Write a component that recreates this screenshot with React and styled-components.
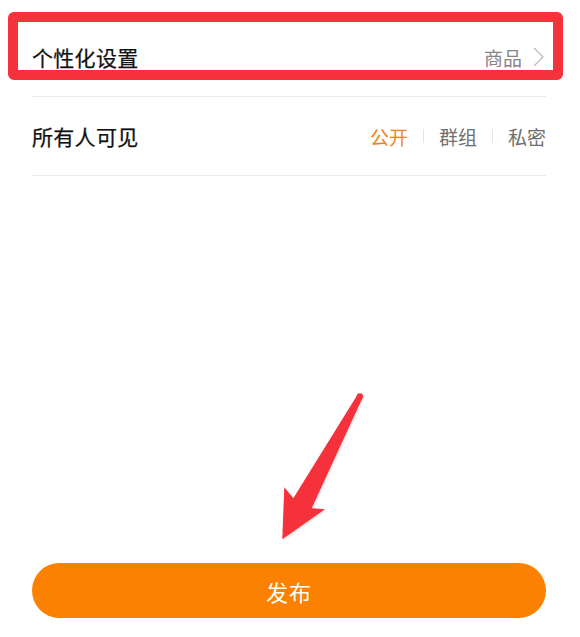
import React, { useState } from 'react';
import styled, { createGlobalStyle } from 'styled-components';

const GlobalStyle = createGlobalStyle`
  html, body {
    margin: 0;
    padding: 0;
    background: #ffffff;
  }
  body {
    font-family: "Noto Sans CJK SC", "Noto Sans", sans-serif;
  }
`;

const Page = styled.div`
  position: relative;
  box-sizing: border-box;
  width: 580px;
  min-height: 637px;
  padding: 18px 34px 19px 32px;
  display: flex;
  flex-direction: column;
  background: #fff;
`;

const Row = styled.div`
  height: 78px;
  display: flex;
  align-items: center;
  justify-content: space-between;
  border-bottom: 1px solid #ebebeb;
`;

const Label = styled.span`
  font-size: 21px;
  color: #111;
  letter-spacing: 0.3px;
  -webkit-text-stroke: 0.25px #111;
`;

const Value = styled.div`
  display: flex;
  align-items: center;
  gap: 11px;
  padding-right: 2px;
  font-size: 19px;
  color: #858585;
`;

const Options = styled.div`
  display: flex;
  align-items: center;
`;

const Option = styled.button`
  border: none;
  background: none;
  padding: 0;
  font-family: inherit;
  font-size: 19px;
  color: ${(p) => (p.$active ? '#f2831a' : '#6e6e6e')};
  cursor: pointer;
`;

const Divider = styled.span`
  width: 1px;
  height: 14px;
  margin: 0 15px;
  background: #e4e4e4;
`;

const PublishButton = styled.button`
  margin-top: auto;
  height: 55px;
  border: none;
  border-radius: 28px;
  background: #fc8100;
  color: #fff;
  font-family: inherit;
  font-size: 22px;
  letter-spacing: 1px;
  cursor: pointer;
`;

const Highlight = styled.div`
  position: absolute;
  left: 8px;
  top: 12px;
  width: 555px;
  height: 68px;
  box-sizing: border-box;
  border: 10px solid #f5323c;
  border-radius: 6px;
  pointer-events: none;
`;

const ArrowMark = styled.svg`
  position: absolute;
  left: 276px;
  top: 388px;
  width: 94px;
  height: 156px;
  pointer-events: none;
  filter: drop-shadow(1px 1px 1px rgba(0, 0, 0, 0.15));
`;

const choices = ['公开', '群组', '私密'];

export default function App() {
  const [scope, setScope] = useState('公开');

  return (
    <>
      <GlobalStyle />
      <Page>
        <Row>
          <Label>个性化设置</Label>
          <Value>
            商品
            <svg width="11" height="20" viewBox="0 0 11 20">
              <path d="M1 1 L10 10 L1 19" fill="none" stroke="#bdbdbd" strokeWidth="1.4" />
            </svg>
          </Value>
        </Row>
        <Row>
          <Label>所有人可见</Label>
          <Options>
            {choices.map((c, i) => (
              <React.Fragment key={c}>
                {i > 0 && <Divider />}
                <Option $active={scope === c} onClick={() => setScope(c)}>
                  {c}
                </Option>
              </React.Fragment>
            ))}
          </Options>
        </Row>
        <PublishButton>发布</PublishButton>
        <Highlight />
        <ArrowMark viewBox="276 388 94 156">
          <polygon
            points="357.3,395 293.3,498.3 284.3,487.3 282.3,539.3 325,509.3 311.7,508.3 362.3,398.3"
            fill="#f5323c"
          />
          <circle cx="359.8" cy="396.4" r="3.2" fill="#f5323c" />
        </ArrowMark>
      </Page>
    </>
  );
}
